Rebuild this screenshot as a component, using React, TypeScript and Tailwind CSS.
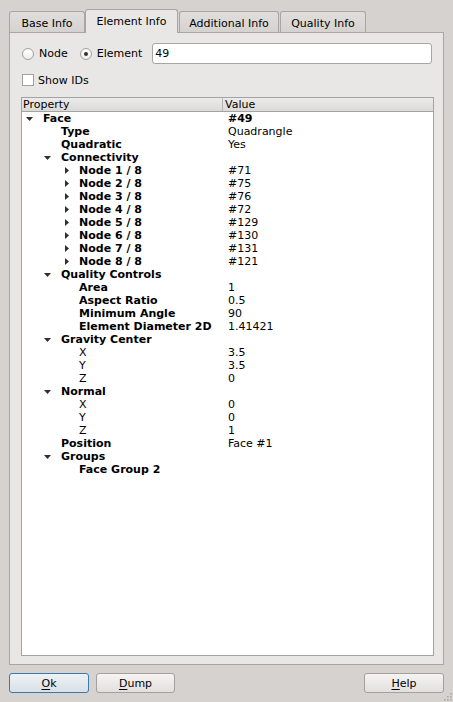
import React from "react";

type Row = {
  label: string;
  value?: string;
  level: number;
  arrow?: "down" | "right";
  plain?: boolean;
  boldValue?: boolean;
};

const rows: Row[] = [
  { label: "Face", value: "#49", level: 0, arrow: "down", boldValue: true },
  { label: "Type", value: "Quadrangle", level: 1 },
  { label: "Quadratic", value: "Yes", level: 1 },
  { label: "Connectivity", level: 1, arrow: "down" },
  { label: "Node 1 / 8", value: "#71", level: 2, arrow: "right" },
  { label: "Node 2 / 8", value: "#75", level: 2, arrow: "right" },
  { label: "Node 3 / 8", value: "#76", level: 2, arrow: "right" },
  { label: "Node 4 / 8", value: "#72", level: 2, arrow: "right" },
  { label: "Node 5 / 8", value: "#129", level: 2, arrow: "right" },
  { label: "Node 6 / 8", value: "#130", level: 2, arrow: "right" },
  { label: "Node 7 / 8", value: "#131", level: 2, arrow: "right" },
  { label: "Node 8 / 8", value: "#121", level: 2, arrow: "right" },
  { label: "Quality Controls", level: 1, arrow: "down" },
  { label: "Area", value: "1", level: 2 },
  { label: "Aspect Ratio", value: "0.5", level: 2 },
  { label: "Minimum Angle", value: "90", level: 2 },
  { label: "Element Diameter 2D", value: "1.41421", level: 2 },
  { label: "Gravity Center", level: 1, arrow: "down" },
  { label: "X", value: "3.5", level: 2, plain: true },
  { label: "Y", value: "3.5", level: 2, plain: true },
  { label: "Z", value: "0", level: 2, plain: true },
  { label: "Normal", level: 1, arrow: "down" },
  { label: "X", value: "0", level: 2, plain: true },
  { label: "Y", value: "0", level: 2, plain: true },
  { label: "Z", value: "1", level: 2, plain: true },
  { label: "Position", value: "Face #1", level: 1 },
  { label: "Groups", level: 1, arrow: "down" },
  { label: "Face Group 2", level: 2 },
];

const tabs = [
  { label: "Base Info", w: "w-[76px]" },
  { label: "Element Info", w: "w-[93px]", active: true },
  { label: "Additional Info", w: "w-[100px] ml-[1px]" },
  { label: "Quality Info", w: "w-[86px] ml-[1px]" },
];

function Arrow({ dir }: { dir: "down" | "right" }) {
  return dir === "down" ? (
    <svg width="7" height="4" viewBox="0 0 7 4" className="ml-0">
      <path d="M0 0H7L3.5 4Z" fill="#2f2f2f" />
    </svg>
  ) : (
    <svg width="4" height="7" viewBox="0 0 4 7" className="ml-[3px]">
      <path d="M0 0V7L4 3.5Z" fill="#2f2f2f" />
    </svg>
  );
}

function Btn({ k, rest, primary, w }: { k: string; rest: string; primary?: boolean; w: string }) {
  return (
    <div
      className={`${w} flex h-[20px] items-center justify-center rounded-[3px] border ${
        primary
          ? "border-[#3c7aae] bg-[linear-gradient(180deg,#eef2f5,#d8e0e6)]"
          : "border-[#a3a09d] bg-[linear-gradient(180deg,#f5f4f3,#e2e0de)]"
      }`}
    >
      <span>
        <span className="underline underline-offset-2">{k}</span>
        {rest}
      </span>
    </div>
  );
}

export default function App() {
  return (
    <div className="relative h-[702px] w-[453px] bg-[#d6d2cf] px-[9px] pt-[9px] font-['DejaVu_Sans',sans-serif] text-[11px] leading-[13px] text-black">
      {/* tabs */}
      <div className="flex h-[23px] items-end">
        {tabs.map((t) =>
          t.active ? (
            <div
              key={t.label}
              className={`${t.w} relative z-10 -mb-px flex h-[24px] items-start justify-center rounded-t-[3px] border border-b-0 border-[#a8a5a2] bg-[#e8e7e6] pt-[5px]`}
            >
              {t.label}
            </div>
          ) : (
            <div
              key={t.label}
              className={`${t.w} flex h-[21px] items-start justify-center rounded-t-[3px] border border-b-0 border-[#a8a5a2] bg-[linear-gradient(180deg,#e0dedc,#d5d2d0)] pt-[5px]`}
            >
              {t.label}
            </div>
          )
        )}
      </div>

      {/* panel */}
      <div className="flex h-[633px] w-[435px] flex-col border border-[#a8a5a2] bg-[#e8e7e6] px-[11px] pt-[10px]">
        <div className="flex h-[21px] items-center">
          <span className="ml-px h-[12px] w-[12px] rounded-full border border-[#a3a09d] bg-[linear-gradient(180deg,#ffffff,#eeeeee)]" />
          <span className="ml-[5px]">Node</span>
          <span className="ml-[12px] flex h-[12px] w-[12px] items-center justify-center rounded-full border border-[#a3a09d] bg-[linear-gradient(180deg,#ffffff,#eeeeee)]">
            <span className="h-[4px] w-[4px] rounded-full bg-[#333]" />
          </span>
          <span className="ml-[5px]">Element</span>
          <div className="ml-[10px] flex h-[21px] w-[280px] items-center rounded-[3px] border border-[#a8a5a2] bg-white pl-[2px]">
            49
          </div>
        </div>

        <div className="mt-[10px] flex h-[12px] items-center">
          <span className="ml-px h-[12px] w-[12px] border border-[#a3a09d] bg-white" />
          <span className="ml-[4px]">Show IDs</span>
        </div>

        {/* tree */}
        <div className="mt-[11px] flex h-[559px] w-[413px] flex-col border border-[#a3a3a3] bg-white">
          <div className="flex h-[14px] border-b border-[#a3a3a3] bg-[linear-gradient(180deg,#ecebea,#dcdad8)]">
            <div className="w-[201px] border-r border-[#b5b3b1] pl-[1px] leading-[14px]">Property</div>
            <div className="pl-[2px] leading-[14px]">Value</div>
          </div>
          <div className="flex flex-col">
            {rows.map((r, i) => (
              <div key={i} className="flex h-[13px] items-center">
                <div
                  className={`flex w-[201px] items-center ${
                    r.level === 0 ? "pl-[4px]" : r.level === 1 ? "pl-[22px]" : "pl-[40px]"
                  }`}
                >
                  <span className="flex w-[17px] shrink-0 items-center">
                    {r.arrow && <Arrow dir={r.arrow} />}
                  </span>
                  <span className={r.plain ? "" : "font-bold"}>{r.label}</span>
                </div>
                <div className={`pl-[5px] ${r.boldValue ? "font-bold" : ""}`}>{r.value}</div>
              </div>
            ))}
          </div>
        </div>
      </div>

      {/* buttons */}
      <div className="mt-[8px] flex items-center">
        <Btn k="O" rest="k" primary w="w-[80px]" />
        <div className="ml-[7px]">
          <Btn k="D" rest="ump" w="w-[79px]" />
        </div>
        <div className="ml-auto">
          <Btn k="H" rest="elp" w="w-[80px]" />
        </div>
      </div>

      {/* size grip */}
      <svg width="10" height="10" viewBox="0 0 10 10" className="absolute bottom-[1px] right-[1px]">
        {[
          [8, 2],
          [5, 5],
          [8, 5],
          [2, 8],
          [5, 8],
          [8, 8],
        ].map(([x, y], i) => (
          <rect key={i} x={x} y={y} width="1.5" height="1.5" fill="#a8a5a2" />
        ))}
      </svg>
    </div>
  );
}
